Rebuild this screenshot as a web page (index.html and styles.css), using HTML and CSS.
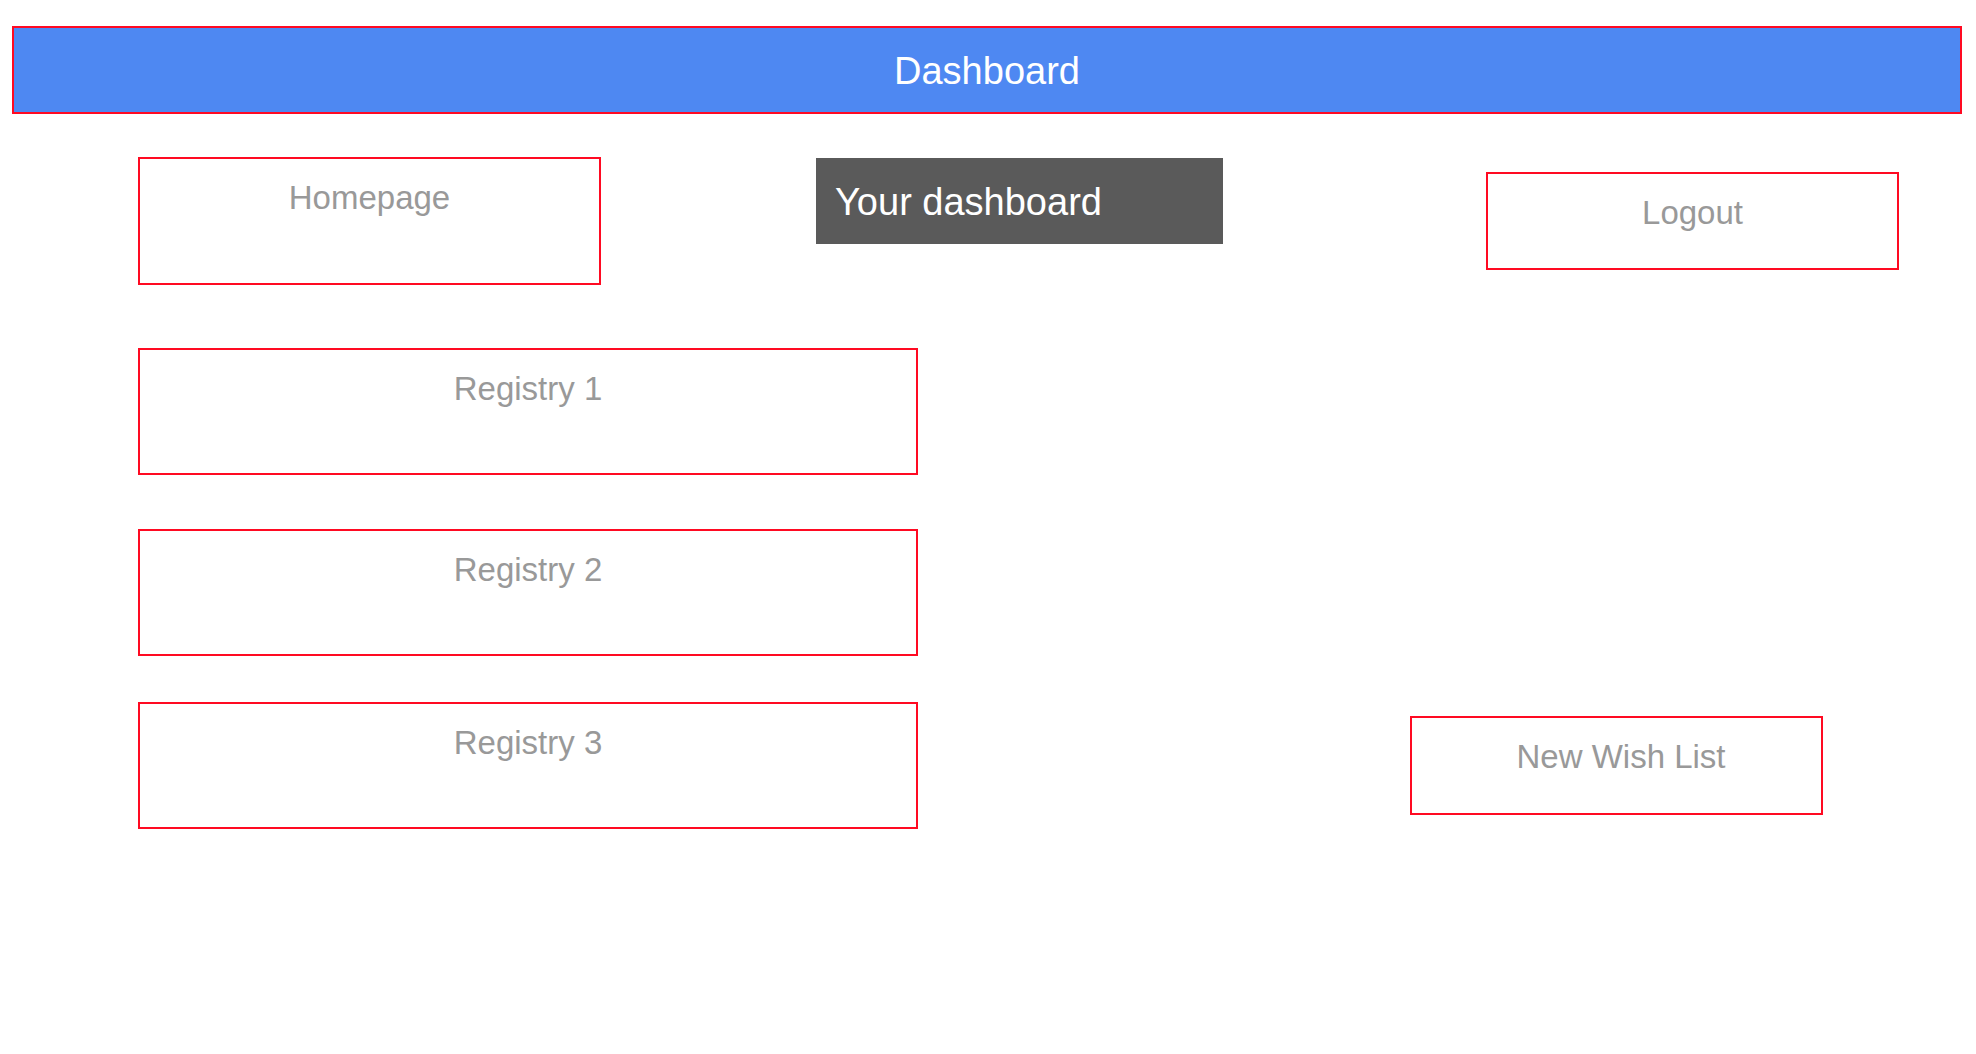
FILE: index.html
```html
<!DOCTYPE html>
<html lang="en">
<head>
<meta charset="utf-8">
<title>Dashboard</title>
<link rel="stylesheet" href="styles.css">
</head>
<body>
<header class="topbar">Dashboard</header>
<main class="page">
  <div class="top-row">
    <div class="box box-home">Homepage</div>
    <div class="title-box">Your dashboard</div>
    <div class="box box-logout">Logout</div>
  </div>
  <div class="lower">
    <div class="registries">
      <div class="box box-reg">Registry 1</div>
      <div class="box box-reg box-reg2">Registry 2</div>
      <div class="box box-reg box-reg3">Registry 3</div>
    </div>
    <div class="box box-wish">New Wish List</div>
  </div>
</main>
</body>
</html>
```

FILE: styles.css
```css
* { box-sizing: border-box; }

html, body {
  margin: 0;
  padding: 0;
  background: #ffffff;
  font-family: "Liberation Sans", Arial, sans-serif;
}

.topbar {
  margin: 26px 14px 0 12px;
  height: 88px;
  background: #4e88f2;
  border: 2px solid #ff0a22;
  color: #ffffff;
  font-size: 38px;
  display: flex;
  align-items: center;
  justify-content: center;
  padding-top: 2px;
}

.page {
  padding-left: 138px;
}

.top-row {
  display: flex;
  align-items: flex-start;
  margin-top: 43px;
}

.box {
  border: 2px solid #ff0a22;
  color: #999999;
  font-size: 33px;
  text-align: center;
  padding-top: 20px;
  line-height: normal;
  background: #ffffff;
}

.box-home {
  width: 463px;
  height: 128px;
}

.title-box {
  margin-left: 215px;
  margin-top: 1px;
  width: 407px;
  height: 86px;
  background: #5a5a5a;
  color: #ffffff;
  font-size: 38px;
  display: flex;
  align-items: center;
  padding-left: 19px;
  padding-top: 2px;
}

.box-logout {
  margin-left: 263px;
  margin-top: 15px;
  width: 413px;
  height: 98px;
}

.lower {
  display: flex;
  align-items: flex-end;
  margin-top: 63px;
}

.registries {
  display: flex;
  flex-direction: column;
}

.box-reg {
  width: 780px;
  height: 127px;
}

.box-reg2 { margin-top: 54px; }
.box-reg3 { margin-top: 46px; }

.box-wish {
  margin-left: 492px;
  margin-bottom: 14px;
  width: 413px;
  height: 99px;
  padding-left: 9px;
}
```
